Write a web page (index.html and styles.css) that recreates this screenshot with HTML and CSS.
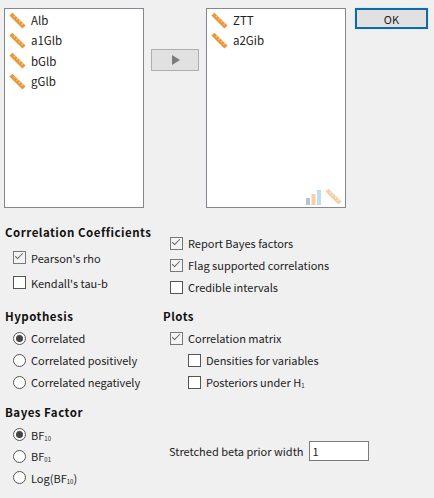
FILE: index.html
```html
<!doctype html>
<html lang="en">
  <head>
    <title>Bayesian Correlation</title>
    <meta charset="utf-8" />
    <link rel="stylesheet" href="styles.css">
  </head>

  <body>
    <svg class="defs" width="0" height="0">
      <symbol id="ruler" viewBox="0 0 16 16">
        <path d="M3.2 0.6 15.6 12.6 12.6 15.6 0.4 3.4Z" fill="#e8973a" />
        <path d="M4.6 4.8 5.8 3.6M7 7.2 8.2 6M9.4 9.6 10.6 8.4M11.8 12 13 10.8" stroke="#f7d3a0" stroke-width="1" />
      </symbol>
    </svg>

    <div class="top">
      <div class="varlist">
        <div class="var"><svg class="icon"><use href="#ruler" /></svg>Alb</div>
        <div class="var"><svg class="icon"><use href="#ruler" /></svg>a1Glb</div>
        <div class="var"><svg class="icon"><use href="#ruler" /></svg>bGlb</div>
        <div class="var"><svg class="icon"><use href="#ruler" /></svg>gGlb</div>
      </div>
      <div class="mover">
        <button class="arrow"><svg width="9" height="10" viewBox="0 0 9 10"><path d="M1 0 9 5 1 10Z" fill="#7d7d7d" /></svg></button>
      </div>
      <div class="varlist target">
        <div class="var"><svg class="icon"><use href="#ruler" /></svg>ZTT</div>
        <div class="var"><svg class="icon"><use href="#ruler" /></svg>a2Gib</div>
        <div class="allowed">
          <svg width="16" height="15" viewBox="0 0 16 15">
            <rect x="0" y="8" width="4" height="7" fill="#b9c4cf" />
            <rect x="5.5" y="4" width="4" height="11" fill="#f6cfa2" />
            <rect x="11" y="0" width="4" height="15" fill="#bfdcf0" />
          </svg>
          <svg class="icon faded"><use href="#ruler" /></svg>
        </div>
      </div>
      <button class="ok">OK</button>
    </div>

    <div class="options">
      <div class="col first">
        <h3>Correlation Coefficients</h3>
        <div class="opt wide"><span class="box checked"></span>Pearson's rho</div>
        <div class="opt wide"><span class="box"></span>Kendall's tau-b</div>
      </div>
      <div class="col second nudge">
        <div class="opt"><span class="box checked"></span>Report Bayes factors</div>
        <div class="opt"><span class="box checked"></span>Flag supported correlations</div>
        <div class="opt"><span class="box"></span>Credible intervals</div>
      </div>

      <div class="col first">
        <h3>Hypothesis</h3>
        <div class="opt"><span class="radio on"></span>Correlated</div>
        <div class="opt"><span class="radio"></span>Correlated positively</div>
        <div class="opt"><span class="radio"></span>Correlated negatively</div>
      </div>
      <div class="col second">
        <h3>Plots</h3>
        <div class="opt"><span class="box checked"></span>Correlation matrix</div>
        <div class="opt sub"><span class="box"></span>Densities for variables</div>
        <div class="opt sub"><span class="box"></span><span>Posteriors under H<sub>1</sub></span></div>
      </div>

      <div class="col first">
        <h3>Bayes Factor</h3>
        <div class="opt tight"><span class="radio on"></span><span>BF<sub>10</sub></span></div>
        <div class="opt tight"><span class="radio"></span><span>BF<sub>01</sub></span></div>
        <div class="opt tight"><span class="radio"></span><span>Log(BF<sub>10</sub>)</span></div>
      </div>
      <div class="col second prior">
        <label for="width">Stretched beta prior width</label>
        <input id="width" value="1" />
      </div>
    </div>
  </body>
</html>
```

FILE: styles.css
```css
body {
  margin: 0;
  height: 498px;
  overflow: hidden;
  background-color: #f0f0f0;
  color: #222;
  font-family: "Noto Sans CJK JP", "Noto Sans", sans-serif;
  font-size: 11px;
}

.defs {
  position: absolute;
}

.top {
  display: flex;
  align-items: flex-start;
  padding: 8px 0 0 4px;
}

.varlist {
  position: relative;
  box-sizing: border-box;
  width: 140px;
  height: 200px;
  padding-top: 1px;
  background-color: #fff;
  border: 1px solid #828790;
}

.var {
  display: flex;
  align-items: center;
  gap: 5px;
  height: 20.3px;
  padding-left: 4px;
  font-size: 11.5px;
}

.icon {
  width: 17px;
  height: 17px;
}

.mover {
  width: 62px;
  padding-top: 41px;
  display: flex;
  justify-content: center;
}

.arrow {
  display: flex;
  align-items: center;
  justify-content: center;
  width: 48px;
  height: 22px;
  padding: 0;
  background-color: #e1e1e1;
  border: 1px solid #adadad;
}

.allowed {
  position: absolute;
  right: 3px;
  bottom: 2px;
  display: flex;
  align-items: flex-end;
  gap: 3px;
}

.faded {
  opacity: 0.45;
}

.ok {
  box-sizing: border-box;
  width: 73px;
  height: 21px;
  margin-left: 9px;
  padding: 0;
  background-color: #e1e1e1;
  border: 2px solid #0f6ba8;
  box-shadow: 0 0 2px #bfe3f7;
  color: #222;
  font: inherit;
}

.options {
  display: grid;
  grid-template-columns: 158px 1fr;
  grid-template-rows: 84px 96px auto;
  padding: 15px 0 0 5px;
}

h3 {
  margin: 0;
  height: 18px;
  line-height: 18px;
  font-size: 11.5px;
  font-weight: 700;
  letter-spacing: 0.5px;
  color: #111;
}

.opt {
  display: flex;
  align-items: center;
  gap: 5px;
  height: 22px;
  margin-left: 8px;
  white-space: nowrap;
}

.opt.tight {
  height: 21.5px;
}

h3 + .opt {
  margin-top: 2px;
}

h3 + .opt.wide {
  margin-top: 4px;
}

h3 + .opt.tight {
  margin-top: 3px;
}

.second .opt {
  margin-left: 7px;
}

.second .opt.sub {
  margin-left: 25px;
}

.opt.wide {
  height: 25px;
}

.nudge {
  padding-top: 9px;
}

.box,
.radio {
  flex: none;
  box-sizing: border-box;
  position: relative;
  width: 13px;
  height: 13px;
  background-color: #fff;
  border: 1px solid #555;
}

.radio {
  border-radius: 50%;
}

.box.checked {
  background-color: #f4f4f4;
  border-color: #777;
}

.box.checked::after {
  content: "";
  position: absolute;
  left: 1px;
  top: 1px;
  width: 7px;
  height: 3px;
  border-left: 1.5px solid #666;
  border-bottom: 1.5px solid #666;
  transform: rotate(-45deg);
}

.radio.on::after {
  content: "";
  position: absolute;
  left: 2px;
  top: 2px;
  width: 7px;
  height: 7px;
  border-radius: 50%;
  background-color: #444;
}

sub {
  font-size: 6px;
  line-height: 0;
  vertical-align: -1px;
}

.prior {
  display: flex;
  align-items: center;
  gap: 5px;
  padding: 38px 0 0 6px;
  align-self: start;
  height: 20px;
}

.prior input {
  box-sizing: border-box;
  width: 60px;
  height: 20px;
  padding: 0 0 0 3px;
  background-color: #fff;
  border: 1px solid #7a7a7a;
  color: #222;
  font: inherit;
}
```
